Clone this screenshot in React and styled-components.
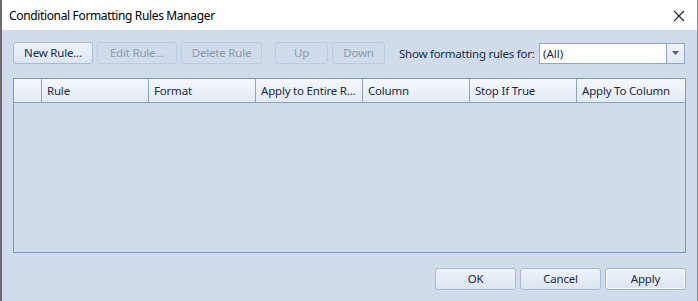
import styled, { createGlobalStyle } from "styled-components";

const GlobalStyle = createGlobalStyle`
    html, body {
        margin: 0;
        padding: 0;
        background: #d0dcec;
    }
    body {
        font-family: "Noto Sans", "Open Sans", sans-serif;
    }
`;

const columns = [
    { title: "", width: 28 },
    { title: "Rule", width: 107 },
    { title: "Format", width: 107 },
    { title: "Apply to Entire R...", width: 107 },
    { title: "Column", width: 107 },
    { title: "Stop If True", width: 107 },
    { title: "Apply To Column", width: 107 },
];

export default function App() {
    return (
        <>
            <GlobalStyle />
            <Window>
                <TitleBar>
                    <Title>Conditional Formatting Rules Manager</Title>
                    <CloseBtn>
                        <svg width="12" height="12" viewBox="0 0 12 12">
                            <path d="M1 1 L11 11 M11 1 L1 11" stroke="#222" strokeWidth="1.1" />
                        </svg>
                    </CloseBtn>
                </TitleBar>

                <Body>
                    <Toolbar>
                        <Button $w={80}>New Rule...</Button>
                        <Button $w={80} disabled>Edit Rule...</Button>
                        <Button $w={81} disabled>Delete Rule</Button>
                        <Spacer $w={5} />
                        <Button $w={53} disabled>Up</Button>
                        <Button $w={53} disabled>Down</Button>
                        <Label>Show formatting rules for:</Label>
                        <Combo>
                            <ComboText>(All)</ComboText>
                            <ComboArrow>
                                <svg width="7" height="4" viewBox="0 0 7 4">
                                    <path d="M0 0 H7 L3.5 4 Z" fill="#4d6185" />
                                </svg>
                            </ComboArrow>
                        </Combo>
                    </Toolbar>

                    <Grid>
                        <HeaderRow>
                            {columns.map((c, i) => (
                                <HeaderCell key={i} $w={c.width} $last={i === columns.length - 1}>
                                    {c.title}
                                </HeaderCell>
                            ))}
                        </HeaderRow>
                        <GridBody />
                    </Grid>

                    <Footer>
                        <Button $w={81}>OK</Button>
                        <Button $w={81}>Cancel</Button>
                        <Button $w={81} $focused>Apply</Button>
                    </Footer>
                </Body>
            </Window>
        </>
    );
}

/* ================== STYLES ================== */

const Window = styled.div`
    width: 698px;
    height: 301px;
    box-sizing: border-box;
    border-left: 2px solid #6b6b6b;
    border-right: 1px solid #8a8a8a;
    display: flex;
    flex-direction: column;
    background: #d0dcec;
    overflow: hidden;
`;

const TitleBar = styled.div`
    height: 30px;
    flex-shrink: 0;
    background: #fff;
    display: flex;
    align-items: center;
    justify-content: space-between;
    padding: 0 8px 0 7px;
`;

const Title = styled.div`
    font-size: 12px;
    color: #000;
    letter-spacing: -0.35px;
    padding-top: 1px;
`;

const CloseBtn = styled.div`
    width: 20px;
    height: 20px;
    display: flex;
    align-items: center;
    justify-content: center;
    margin-top: 1px;
`;

const Body = styled.div`
    flex: 1;
    display: flex;
    flex-direction: column;
    padding: 12px 12px 12px 11px;
`;

const Toolbar = styled.div`
    display: flex;
    align-items: center;
    gap: 4px;
    height: 22px;
`;

const Spacer = styled.div`
    width: ${({ $w }) => $w}px;
`;

const Button = styled.button`
    width: ${({ $w }) => $w}px;
    height: 22px;
    box-sizing: border-box;
    padding: 0;
    font-family: "Noto Sans", "Open Sans", sans-serif;
    font-size: 11.5px;
    letter-spacing: -0.2px;
    color: #1a2a48;
    border-radius: 3px;
    border: 1px solid ${({ $focused }) => ($focused ? "#9fb2cc" : "#a9bad2")};
    background: linear-gradient(#eef3fa, #dbe5f2);
    box-shadow: ${({ $focused }) => ($focused ? "inset 0 0 0 1px #fbfdff" : "none")};
    line-height: 20px;

    &:disabled {
        color: #8e99a9;
        border-color: #bccbdf;
        background: #d0dcec;
    }
`;

const Label = styled.span`
    font-size: 11.5px;
    letter-spacing: -0.25px;
    color: #1a2a48;
    margin-left: 10px;
    width: 136px;
    white-space: nowrap;
`;

const Combo = styled.div`
    flex: 1;
    height: 21px;
    box-sizing: border-box;
    border: 1px solid #8fa5c2;
    background: #fff;
    display: flex;
    align-items: stretch;
`;

const ComboText = styled.div`
    flex: 1;
    font-size: 11.5px;
    color: #1a2a48;
    padding-left: 3px;
    line-height: 19px;
`;

const ComboArrow = styled.div`
    width: 17px;
    border-left: 1px solid #8fa5c2;
    background: linear-gradient(#f2f6fb, #dfe8f4);
    display: flex;
    align-items: center;
    justify-content: center;
`;

const Grid = styled.div`
    margin-top: 14px;
    height: 175px;
    box-sizing: border-box;
    border: 1px solid #7c98c0;
    display: flex;
    flex-direction: column;
    width: 673px;
`;

const HeaderRow = styled.div`
    display: flex;
    height: 24px;
    box-sizing: border-box;
    border-bottom: 1px solid #8aa2c4;
    background: linear-gradient(#f4f8fd, #e2eaf5);
`;

const HeaderCell = styled.div`
    width: ${({ $w }) => $w}px;
    flex-shrink: 0;
    box-sizing: border-box;
    border-right: ${({ $last }) => ($last ? "none" : "1px solid #8aa2c4")};
    font-size: 11.5px;
    letter-spacing: -0.2px;
    color: #1a2a48;
    padding-left: 5px;
    line-height: 23px;
    white-space: nowrap;
    overflow: hidden;
`;

const GridBody = styled.div`
    flex: 1;
    background: #d0dcec;
`;

const Footer = styled.div`
    margin-top: 15px;
    display: flex;
    justify-content: flex-end;
    gap: 4px;
    width: 673px;
`;
